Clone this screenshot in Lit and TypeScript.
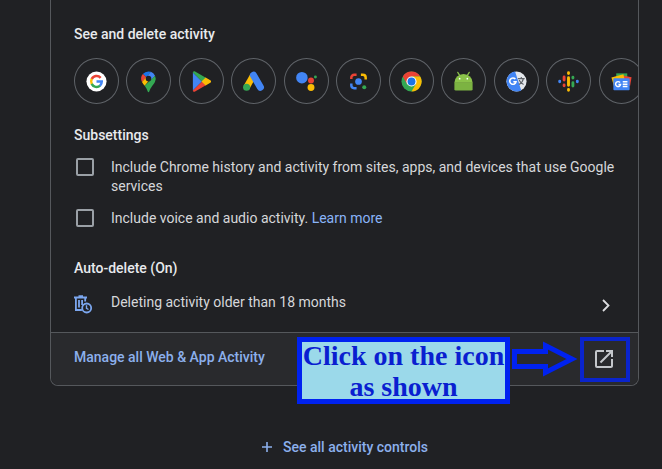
import { LitElement, html, css, svg } from "lit";
import { customElement } from "lit/decorators.js";

const products = [
  {
    name: "Search",
    art: svg`<circle cx="12" cy="12" r="10.5" fill="#fff"/>
      <g fill="none" stroke-width="2.6">
        <path d="M16.3 8.2A5.6 5.6 0 0 0 7 9.5" stroke="#ea4335"/>
        <path d="M7.1 9.3a5.7 5.7 0 0 0 0 5.4" stroke="#fbbc04"/>
        <path d="M7 14.5a5.6 5.6 0 0 0 8.8 1.8" stroke="#34a853"/>
        <path d="M12 12.1h5.5a5.6 5.6 0 0 1-1.9 4.3" stroke="#4285f4"/>
      </g>`,
  },
  {
    name: "Maps",
    art: svg`<path d="M12 1.5a7.6 7.6 0 0 0-5.9 2.7l3.8 3.3 4.5-5.6A8 8 0 0 0 12 1.5z" fill="#1a73e8"/>
      <path d="M14.4 1.9 9.7 7.5l4.4 3.9 4.7-5.5a7.6 7.6 0 0 0-4.4-4z" fill="#4285f4"/>
      <path d="M6.1 4.2a7.5 7.5 0 0 0-.9 8.2l4.7-4.9z" fill="#ea4335"/>
      <path d="M5.2 12.4c.7 1.5 1.8 2.7 2.8 4.1l6.2-7.3-4.6-1.6z" fill="#fbbc04"/>
      <path d="M18.8 5.9 8 16.5c1.8 2.5 2.5 4 3.2 6 .3.8 1.3.8 1.6 0 1.6-4.9 4-6.1 5.9-9.9a7.5 7.5 0 0 0 .1-6.7z" fill="#34a853"/>
      <circle cx="12" cy="9" r="2.9" fill="#202124"/>`,
  },
  {
    name: "Play",
    art: svg`<path d="M3 2.5v19l9.5-9.5z" fill="#4285f4"/>
      <path d="M3 3c0-1.5 1.2-2 2.3-1.4L17 8.3 12.5 12 3 2.5z" fill="#34a853"/>
      <path d="M3 21c0 1.5 1.2 2 2.3 1.4L17 15.7 12.5 12 3 21.5z" fill="#ea4335"/>
      <path d="m16.3 7.9 4.9 2.8c1.1.6 1.1 2 0 2.6l-4.9 2.8L12 12z" fill="#fbbc04"/>`,
  },
  {
    name: "Ads",
    art: svg`<path d="M4.8 17.8 11.8 5.5" stroke="#fbbc04" stroke-width="6.8"/>
      <path d="m12 5.5 7.2 12.5" stroke="#4285f4" stroke-width="7.4" stroke-linecap="round"/>
      <circle cx="4.8" cy="18" r="3.7" fill="#34a853"/>`,
  },
  {
    name: "Assistant",
    art: svg`<circle cx="7.2" cy="8" r="6" fill="#4285f4"/>
      <circle cx="16.7" cy="11" r="3.1" fill="#ea4335"/>
      <circle cx="21.3" cy="7.3" r="1.5" fill="#34a853"/>
      <circle cx="16.7" cy="18.2" r="3.6" fill="#fbbc04"/>`,
  },
  {
    name: "Lens",
    art: svg`<circle cx="12" cy="12" r="3.5" fill="#4285f4"/>
      <circle cx="18" cy="18" r="2.1" fill="#34a853"/>
      <g fill="none" stroke-width="2.6">
        <path d="M4.5 9.5V8a3 3 0 0 1 3-3h2.500" stroke="#ea4335"/>
        <path d="M14.5 5h2a3 3 0 0 1 3 3v2" stroke="#fbbc04"/>
        <path d="M4.5 14v2a3 3 0 0 0 3 3h2.5" stroke="#4285f4"/>
      </g>`,
  },
  {
    name: "Chrome",
    art: svg`<circle cx="12" cy="12" r="10.5" fill="#34a853"/>
      <path d="M2.9 6.7a10.5 10.5 0 0 1 18.2 0H12L7.4 14.6z" fill="#ea4335"/>
      <path d="M21.1 6.7A10.5 10.5 0 0 1 12 22.5l4.6-7.8L12 6.7z" fill="#fbbc04"/>
      <circle cx="12" cy="12" r="5.3" fill="#fff"/>
      <circle cx="12" cy="12" r="4.1" fill="#1a73e8"/>`,
  },
  {
    name: "Android",
    art: svg`<path d="M2.5 13v7A1.5 1.5 0 0 0 4 21.5h16a1.5 1.5 0 0 0 1.5-1.5v-7z" fill="#7cb342"/>
      <path d="M2.5 13.2a9.5 9 0 0 1 19 0z" fill="#8bc34a"/>
      <path d="m6 2.5 2.3 3.6M18 2.5l-2.3 3.6" stroke="#8bc34a" stroke-width="1.3" stroke-linecap="round"/>
      <circle cx="8" cy="9" r=".9" fill="#fff"/><circle cx="16" cy="9" r=".9" fill="#fff"/>`,
  },
  {
    name: "Translate",
    art: svg`<circle cx="12" cy="12" r="10.5" fill="#e4e7ec"/>
      <path d="M10.5 1.6a10.5 10.5 0 1 0 6.5 19.7z" fill="#4285f4"/>
      <path d="M10.8 9.5a3.3 3.3 0 1 0 .7 2.7H8.7" fill="none" stroke="#fff" stroke-width="1.7"/>
      <path d="M13.5 9h7M17 7.2V9m2.2 0c-.7 3-2.4 5-4.6 6.2M14.8 10.5c.8 2.1 2.5 3.8 4.6 4.7" fill="none" stroke="#5f6368" stroke-width="1.2"/>`,
  },
  {
    name: "Podcasts",
    art: svg`<g fill="none" stroke-width="3" stroke-linecap="round">
        <path d="M12 2.8v.8M12 8v8M12 20.4v.8" stroke="#fbbc04"/>
        <path d="M7.4 7.3v3.2M7.4 15.6v.9" stroke="#ea4335"/>
        <path d="M16.6 7.5v.9M16.6 13.2v3.5" stroke="#34a853"/>
        <path d="M2.8 11.8v.4M21.2 11.8v.4" stroke="#4285f4"/>
      </g>`,
  },
  {
    name: "News",
    art: svg`<path d="M6.5 3.5h11.5v9H6.5z" fill="#34a853"/>
      <path d="m12 5.5 10.5 2-1.5 9-9-2z" fill="#ea4335"/>
      <path d="m1.5 7.7 12.5-3.2 2 9-12 3z" fill="#fbbc04"/>
      <rect x="3.5" y="8.5" width="17" height="12.5" rx="1" fill="#4285f4"/>
      <path d="M10.5 13.1a2.6 2.6 0 1 0 .5 2.1H8.8M13.3 12.3h4.9M13.3 14.8h4.9M13.3 17.3h4.9" fill="none" stroke="#fff" stroke-width="1.5"/>`,
  },
];

@customElement("app-root")
export class AppRoot extends LitElement {
  static styles = css`
    :host {
      display: block;
      box-sizing: border-box;
      min-height: 100vh;
      padding: 0 23px 0 50px;
      background: #202124;
      color: #d6d7da;
      font: 14px/19px Roboto, "Liberation Sans", sans-serif;
    }
    .card {
      border: 1px solid #55585c;
      border-top: 0;
      border-radius: 0 0 8px 8px;
    }
    .body {
      padding: 24px 0 18px 23px;
    }
    h2 {
      margin: 0;
      color: #e8eaed;
      font: 500 14px/20px Roboto, "Liberation Sans", sans-serif;
    }
    .strip {
      overflow: hidden;
      padding: 14px 0 21px;
    }
    .products {
      display: grid;
      grid-template-columns: repeat(11, 1fr);
      margin: 0 -13px 0 0;
      padding: 0;
      list-style: none;
    }
    .product {
      box-sizing: border-box;
      display: grid;
      place-items: center;
      width: 45px;
      height: 46px;
      padding: 0;
      border: 1px solid #5f6368;
      border-radius: 50%;
      background: none;
    }
    .product svg {
      width: 23px;
      height: 23px;
    }
    .option,
    .schedule {
      display: grid;
      grid-template-columns: 37px 1fr;
    }
    .option {
      margin-top: 13px;
      padding-right: 18px;
    }
    .option input {
      appearance: none;
      box-sizing: border-box;
      width: 18px;
      height: 18px;
      margin: 0 2px;
      border: 2px solid #9aa0a6;
      border-radius: 2px;
    }
    a {
      color: #8ab4f8;
      text-decoration: none;
    }
    .auto {
      margin-top: 30px;
    }
    .schedule {
      box-sizing: border-box;
      width: 100%;
      grid-template-columns: 37px 1fr 12px;
      align-items: center;
      margin-top: 12px;
      padding: 0 26px 0 0;
      border: 0;
      background: none;
      color: inherit;
      font: inherit;
      text-align: left;
    }
    .schedule svg {
      display: block;
    }
    .footer {
      position: relative;
      display: flex;
      align-items: center;
      justify-content: space-between;
      height: 52px;
      padding: 0 22px 0 23px;
      border-top: 1px solid #55585c;
      border-radius: 0 0 8px 8px;
      background: #292a2d;
    }
    .strong {
      color: #8cb0ec;
      font-weight: 500;
      line-height: 20px;
    }
    .manage {
      padding-bottom: 4px;
    }
    .open {
      display: grid;
      padding: 0;
      border: 0;
      background: none;
    }
    .guide {
      position: absolute;
      top: 4px;
      right: 8px;
      display: flex;
      align-items: flex-start;
      pointer-events: none;
    }
    .note {
      box-sizing: border-box;
      display: grid;
      align-content: center;
      justify-content: center;
      width: 213px;
      height: 67px;
      margin-right: 2px;
      border: 5px solid #0022f0;
      background: #9bd9ea;
      color: #0a1fd0;
      font: bold 28px/31px "Liberation Serif", serif;
      text-align: center;
      white-space: nowrap;
    }
    .arrow {
      margin: 4px 2px 0 0;
    }
    .frame {
      box-sizing: border-box;
      width: 50px;
      height: 45px;
      border: 4px solid #0a24cc;
    }
    .more {
      display: flex;
      align-items: center;
      justify-content: center;
      gap: 10px;
      margin-top: 51px;
    }
  `;

  render() {
    return html`
      <main class="card">
        <div class="body">
          <h2>See and delete activity</h2>
          <div class="strip">
            <ul class="products">
              ${products.map(
                (p) => html`<li>
                  <button class="product" aria-label=${p.name}>
                    <svg viewBox="0 0 24 24" fill="none">${p.art}</svg>
                  </button>
                </li>`
              )}
            </ul>
          </div>
          <h2>Subsettings</h2>
          <div class="option">
            <input type="checkbox" id="history" />
            <label for="history">Include Chrome history and activity from sites, apps, and devices that use Google services</label>
          </div>
          <div class="option">
            <input type="checkbox" id="voice" />
            <span><label for="voice">Include voice and audio activity.</label> <a href="#learn">Learn more</a></span>
          </div>
          <h2 class="auto">Auto-delete (On)</h2>
          <button class="schedule">
            <svg width="20" height="24" viewBox="0 -5 20 24" fill="none" stroke="#7ba6ee" stroke-width="1.8">
              <path d="M0 2.5h13M4.5 1.2h4.5M1.9 2.5v12.5h6M11.2 2.5v4M5 5v7.5M8.1 5v5" />
              <circle cx="12.7" cy="13" r="4.5" />
              <path d="M12.5 10.3v3l2 1.2" stroke-width="1.4" />
            </svg>
            <span>Deleting activity older than 18 months</span>
            <svg width="12" height="22" viewBox="0 -6 12 22" fill="none" stroke="#dcdde0" stroke-width="1.8">
              <path d="m3 3 5.5 5.5L3 14" />
            </svg>
          </button>
        </div>
        <div class="footer">
          <a class="strong manage" href="#manage">Manage all Web &amp; App Activity</a>
          <button class="open" aria-label="Open">
            <svg width="24" height="24" viewBox="0 0 24 24" fill="#c4c7cb">
              <path d="M19 19H5V5h7V3H5a2 2 0 0 0-2 2v14a2 2 0 0 0 2 2h14c1.1 0 2-.9 2-2v-7h-2v7zM14 3v2h3.59l-9.83 9.83 1.41 1.41L19 6.41V10h2V3h-7z" />
            </svg>
          </button>
          <div class="guide">
            <div class="note"><span>Click on the icon<br />as shown</span></div>
            <svg class="arrow" width="66" height="36" viewBox="0 0 66 36" fill="none" stroke="#0022f0" stroke-width="5">
              <path d="M2.5 10.5h31V4.5L60 18 33.5 31.5v-6h-31z" />
            </svg>
            <div class="frame"></div>
          </div>
        </div>
      </main>
      <div class="more">
        <svg width="12" height="12" viewBox="0 0 12 12" stroke="#8cb0ec" stroke-width="1.6">
          <path d="M6 1v10M1 6h10" />
        </svg>
        <a class="strong" href="#controls">See all activity controls</a>
      </div>
    `;
  }
}
